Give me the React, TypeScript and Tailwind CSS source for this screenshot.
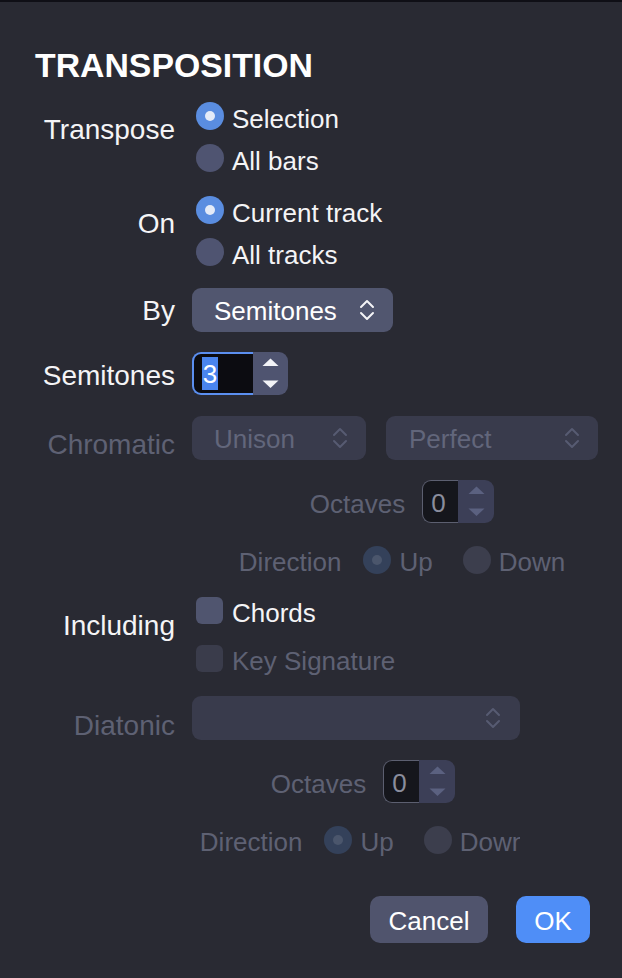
import React from "react";

const Chevrons = ({ color }: { color: string }) => (
  <svg width="16" height="24" viewBox="0 0 16 24" fill="none">
    <path d="M2 9 L8 3 L14 9" stroke={color} strokeWidth="2" strokeLinecap="round" strokeLinejoin="round" />
    <path d="M2 15 L8 21 L14 15" stroke={color} strokeWidth="2" strokeLinecap="round" strokeLinejoin="round" />
  </svg>
);

const StepArrows = ({ color }: { color: string }) => (
  <svg width="35" height="43" viewBox="0 0 35 43">
    <polygon points="9.5,14 17.5,6.5 25.5,14" fill={color} />
    <polygon points="9.5,28.5 25.5,28.5 17.5,36" fill={color} />
  </svg>
);

const Radio = ({ on, disabled }: { on?: boolean; disabled?: boolean }) => {
  if (disabled) {
    return on ? (
      <div className="w-[28px] h-[28px] rounded-full bg-[#34415a] flex items-center justify-center shrink-0">
        <div className="w-[10px] h-[10px] rounded-full bg-[#4b566c]" />
      </div>
    ) : (
      <div className="w-[28px] h-[28px] rounded-full bg-[#3c3e4d] shrink-0" />
    );
  }
  return on ? (
    <div className="w-[28px] h-[28px] rounded-full bg-[#5a8de0] flex items-center justify-center shrink-0 mb-[1px]">
      <div className="w-[10px] h-[10px] rounded-full bg-[#e4ebf8]" />
    </div>
  ) : (
    <div className="w-[28px] h-[28px] rounded-full bg-[#4f5471] shrink-0 mb-[1px]" />
  );
};

const RadioRow = ({ on, label }: { on?: boolean; label: string }) => (
  <div className="h-[42px] flex items-center pl-[4px] gap-[8px] whitespace-nowrap">
    <Radio on={on} />
    <span className="pt-[5px] leading-[30px]">{label}</span>
  </div>
);

const DisabledSpinner = () => (
  <div className="flex h-[43px] w-[72px]">
    <div className="w-[36px] h-full rounded-l-[9px] border-[1.5px] border-r-0 border-[#5c5f70] bg-[#15161c] flex items-center pl-[8px] pt-[3px] text-[#8a8d9c] leading-none">
      0
    </div>
    <div className="w-[36px] h-full rounded-r-[9px] bg-[#3c3f57] flex items-center justify-center">
      <StepArrows color="#5b6180" />
    </div>
  </div>
);

const OctavesRow = () => (
  <div className="flex items-center justify-center pl-[14px] gap-[17px] h-[43px] mt-[20px] whitespace-nowrap">
    <span className="text-[#5e6173] pt-[4px] leading-[30px]">Octaves</span>
    <DisabledSpinner />
  </div>
);

const DirectionRow = () => (
  <div className="flex items-center justify-center pl-[14px] h-[42px] mt-[16px] whitespace-nowrap text-[#5e6173] overflow-hidden">
    <span className="shrink-0 pt-[3px] leading-[30px]">Direction</span>
    <div className="ml-[22px] shrink-0">
      <Radio on disabled />
    </div>
    <span className="ml-[8px] shrink-0 pt-[3px] leading-[30px]">Up</span>
    <div className="ml-[30px] shrink-0">
      <Radio disabled />
    </div>
    <span className="ml-[8px] shrink-0 pt-[3px] leading-[30px]">Down</span>
  </div>
);

const lbl = "w-[175px] text-right text-[28px] whitespace-nowrap";

export default function App() {
  return (
    <div className="w-[622px] h-[978px] bg-[#292a33] border-t-2 border-[#0f0f16] font-['Liberation_Sans',Arial,sans-serif] text-[26px] text-[#f4f4f6] flex flex-col overflow-hidden">
      <div className="ml-[35px] mt-[46px] text-[33.8px] leading-[34px] font-bold text-white">TRANSPOSITION</div>

      {/* Transpose */}
      <div className="flex mt-[13px]">
        <div className={`${lbl} leading-[42px] pt-[14px]`}>Transpose</div>
        <div className="ml-[17px] flex flex-col">
          <RadioRow on label="Selection" />
          <RadioRow label="All bars" />
        </div>
      </div>

      {/* On */}
      <div className="flex mt-[10px]">
        <div className={`${lbl} leading-[42px] pt-[14px]`}>On</div>
        <div className="ml-[17px] flex flex-col">
          <RadioRow on label="Current track" />
          <RadioRow label="All tracks" />
        </div>
      </div>

      {/* By */}
      <div className="flex mt-[15px] items-center h-[44px]">
        <div className={`${lbl} leading-[44px] pt-[2px]`}>By</div>
        <div className="ml-[17px] w-[201px] h-[44px] rounded-[9px] bg-[#51566f] flex items-center justify-between pl-[22px] pr-[18px] text-white leading-none">
          <span className="pt-[2px]">Semitones</span>
          <Chevrons color="#f4f4f6" />
        </div>
      </div>

      {/* Semitones */}
      <div className="flex mt-[20px] items-center h-[43px]">
        <div className={`${lbl} leading-[43px] pt-[3px]`}>Semitones</div>
        <div className="ml-[17px] flex h-[43px] w-[96px]">
          <div className="w-[61px] h-full rounded-l-[9px] border-2 border-r-0 border-[#5b8ff0] bg-[#0c0c11] flex items-center pl-[8px]">
            <span className="inline-block w-[16px] h-[33px] leading-[35px] bg-[#4a85ee] text-white text-center">3</span>
          </div>
          <div className="w-[35px] h-full rounded-r-[9px] bg-[#4f5470] flex items-center justify-center">
            <StepArrows color="#f2f3f7" />
          </div>
        </div>
      </div>

      {/* Chromatic */}
      <div className="flex mt-[21px]">
        <div className={`${lbl} leading-[44px] pt-[7px] text-[#5e6173]`}>Chromatic</div>
        <div className="ml-[17px] w-[406px] flex flex-col">
          <div className="flex gap-[20px] h-[44px]">
            <div className="w-[174px] h-[44px] rounded-[9px] bg-[#393b4c] flex items-center justify-between pl-[22px] pr-[18px] text-[#62667b] leading-none">
              <span className="pt-[2px]">Unison</span>
              <Chevrons color="#575b72" />
            </div>
            <div className="w-[212px] h-[44px] rounded-[9px] bg-[#393b4c] flex items-center justify-between pl-[23px] pr-[18px] text-[#62667b] leading-none">
              <span className="pt-[2px]">Perfect</span>
              <Chevrons color="#575b72" />
            </div>
          </div>
          <OctavesRow />
          <DirectionRow />
        </div>
      </div>

      {/* Including */}
      <div className="flex mt-[6px]">
        <div className={`${lbl} leading-[48px] pt-[15px]`}>Including</div>
        <div className="ml-[17px] flex flex-col">
          <div className="h-[48px] flex items-center pl-[4px] gap-[9px] whitespace-nowrap">
            <div className="w-[27px] h-[27px] rounded-[6px] bg-[#50556f] mb-[1px]" />
            <span className="pt-[3px] leading-[30px]">Chords</span>
          </div>
          <div className="h-[48px] flex items-center pl-[4px] gap-[9px] whitespace-nowrap text-[#5e6173]">
            <div className="w-[27px] h-[27px] rounded-[6px] bg-[#3a3c4b] mb-[1px]" />
            <span className="pt-[3px] leading-[30px]">Key Signature</span>
          </div>
        </div>
      </div>

      {/* Diatonic */}
      <div className="flex mt-[13px]">
        <div className={`${lbl} leading-[44px] pt-[8px] text-[#5e6173]`}>Diatonic</div>
        <div className="ml-[17px] w-[328px] flex flex-col overflow-hidden">
          <div className="w-[328px] h-[44px] rounded-[9px] bg-[#393b4c] flex items-center justify-end pr-[19px]">
            <Chevrons color="#575b72" />
          </div>
          <OctavesRow />
          <DirectionRow />
        </div>
      </div>

      {/* Buttons */}
      <div className="flex justify-end gap-[28px] pr-[32px] mt-[35px]">
        <div className="w-[118px] h-[47px] rounded-[10px] bg-[#50546d] flex items-center justify-center text-white leading-none pt-[2px]">Cancel</div>
        <div className="w-[74px] h-[47px] rounded-[10px] bg-[#4f8ef7] flex items-center justify-center text-white leading-none pt-[2px]">OK</div>
      </div>
    </div>
  );
}
